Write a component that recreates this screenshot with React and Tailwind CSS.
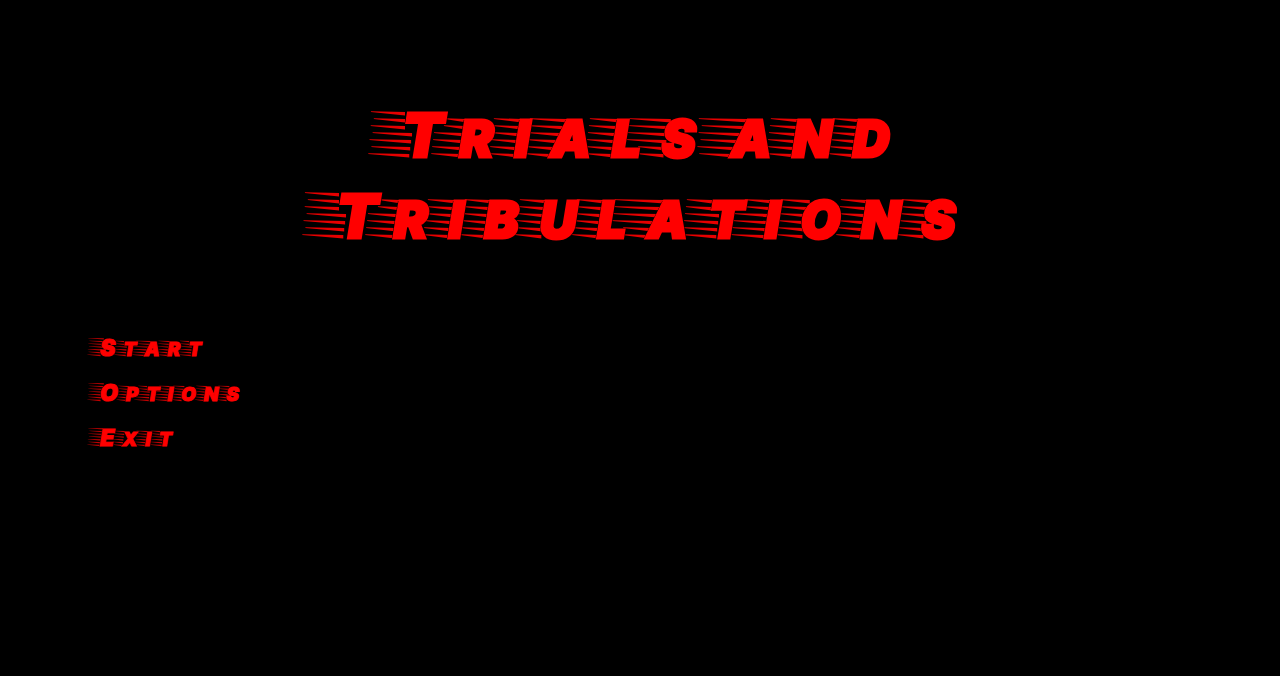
import clsx from "clsx";

const ROWS = [1, 8, 15, 22, 29, 36];
const CAP_HEIGHT = 38;
const STAGGER = [0, 4, 2, 5, 3, 6, 4];

// How far a streak may run under the letter on its left, by that letter's open space.
const TUCK = { t: 15, l: 18, p: 12, x: 8, a: 8, r: 7, s: 5 };

// Horizontal run of the left edge of a letter, from baseline to cap line.
const LEAN = { a: 17, o: 8, s: 8, u: 6 };

function streakPath(y, left, right) {
  return `M${left} ${y - 1.8}L${right} ${y - 1}V${y + 2.4}L${left} ${y - 1}Z`;
}

function Streaks({ letter, previous, size }) {
  const key = letter.toLowerCase();
  const lead = !previous;
  const afterCapital = !lead && previous !== previous.toLowerCase();
  const width = lead ? 32 : afterCapital && size === "title" ? 16 : 21;
  const capital = letter !== key;
  const rows = capital ? [-6, ...ROWS] : ROWS;
  const lean = LEAN[key] ?? 6;
  const d = rows
    .map((y, i) => {
      const up = (CAP_HEIGHT - y) / CAP_HEIGHT;
      let right = width + lean * up + 1;
      if (key === "t") right = y < 9 ? width + 3 : width + 7 + 5 * up;
      let left = lead ? STAGGER[i] + 6 * up - 6 : 2 + 5 * up;
      if (!lead) {
        const before = previous.toLowerCase();
        const blocked =
          (before === "t" && y < 9) ||
          (before === "l" && y > 25) ||
          (before === "p" && y < 20);
        left -= blocked ? 6 : (TUCK[before] ?? 6);
      }
      return streakPath(y, left, right);
    })
    .join("");
  const titleWidth = lead ? "w-8" : afterCapital ? "w-4" : "w-[21px]";
  return (
    <svg
      aria-hidden="true"
      viewBox={`0 0 ${width} ${CAP_HEIGHT}`}
      preserveAspectRatio="none"
      className={clsx(
        "inline overflow-visible align-baseline",
        size === "title" ? "h-[38px]" : "h-[15px]",
        size === "title" ? titleWidth : lead ? "w-3" : "w-2",
      )}
    >
      <path d={d} fill="#ff0000" fillOpacity={size === "title" ? 0.9 : 0.75} />
    </svg>
  );
}

function SpeedWord({ text, size }) {
  return (
    <span className="whitespace-nowrap">
      {[...text].map((letter, i) => {
        const capital = letter !== letter.toLowerCase();
        return (
          <span key={i}>
            <Streaks letter={letter} previous={text[i - 1]} size={size} />
            <span
              className={clsx(
                "relative z-10 leading-[0px] uppercase [-webkit-text-stroke-color:#ff0000]",
                size === "title"
                  ? "[-webkit-text-stroke-width:3px] [text-shadow:-2px_0_#000,2px_0_#000,0_-1px_#000,0_1px_#000]"
                  : "[-webkit-text-stroke-width:1px] [text-shadow:-1px_0_#000,1px_0_#000]",
                size === "title" && (capital ? "text-[60px]" : "text-[51px]"),
                size === "menu" && (capital ? "text-[23px]" : "text-[19px]"),
              )}
            >
              {letter}
            </span>
          </span>
        );
      })}
    </span>
  );
}

export default function App() {
  return (
    <main className="min-h-screen bg-black px-[88px] pt-[111px] font-['Inter',sans-serif] font-black text-[#ff0000] italic">
      <h1 className="mx-auto max-w-[760px] pr-5 text-center text-base leading-[81px]">
        <SpeedWord text="Trials" size="title" />{" "}
        <SpeedWord text="and" size="title" />{" "}
        <SpeedWord text="Tribulations" size="title" />
      </h1>
      <nav className="mt-[55px] flex flex-col items-start">
        {["Start", "Options", "Exit"].map((label) => (
          <button key={label} type="button" className="cursor-pointer leading-[45px]">
            <SpeedWord text={label} size="menu" />
          </button>
        ))}
      </nav>
    </main>
  );
}
